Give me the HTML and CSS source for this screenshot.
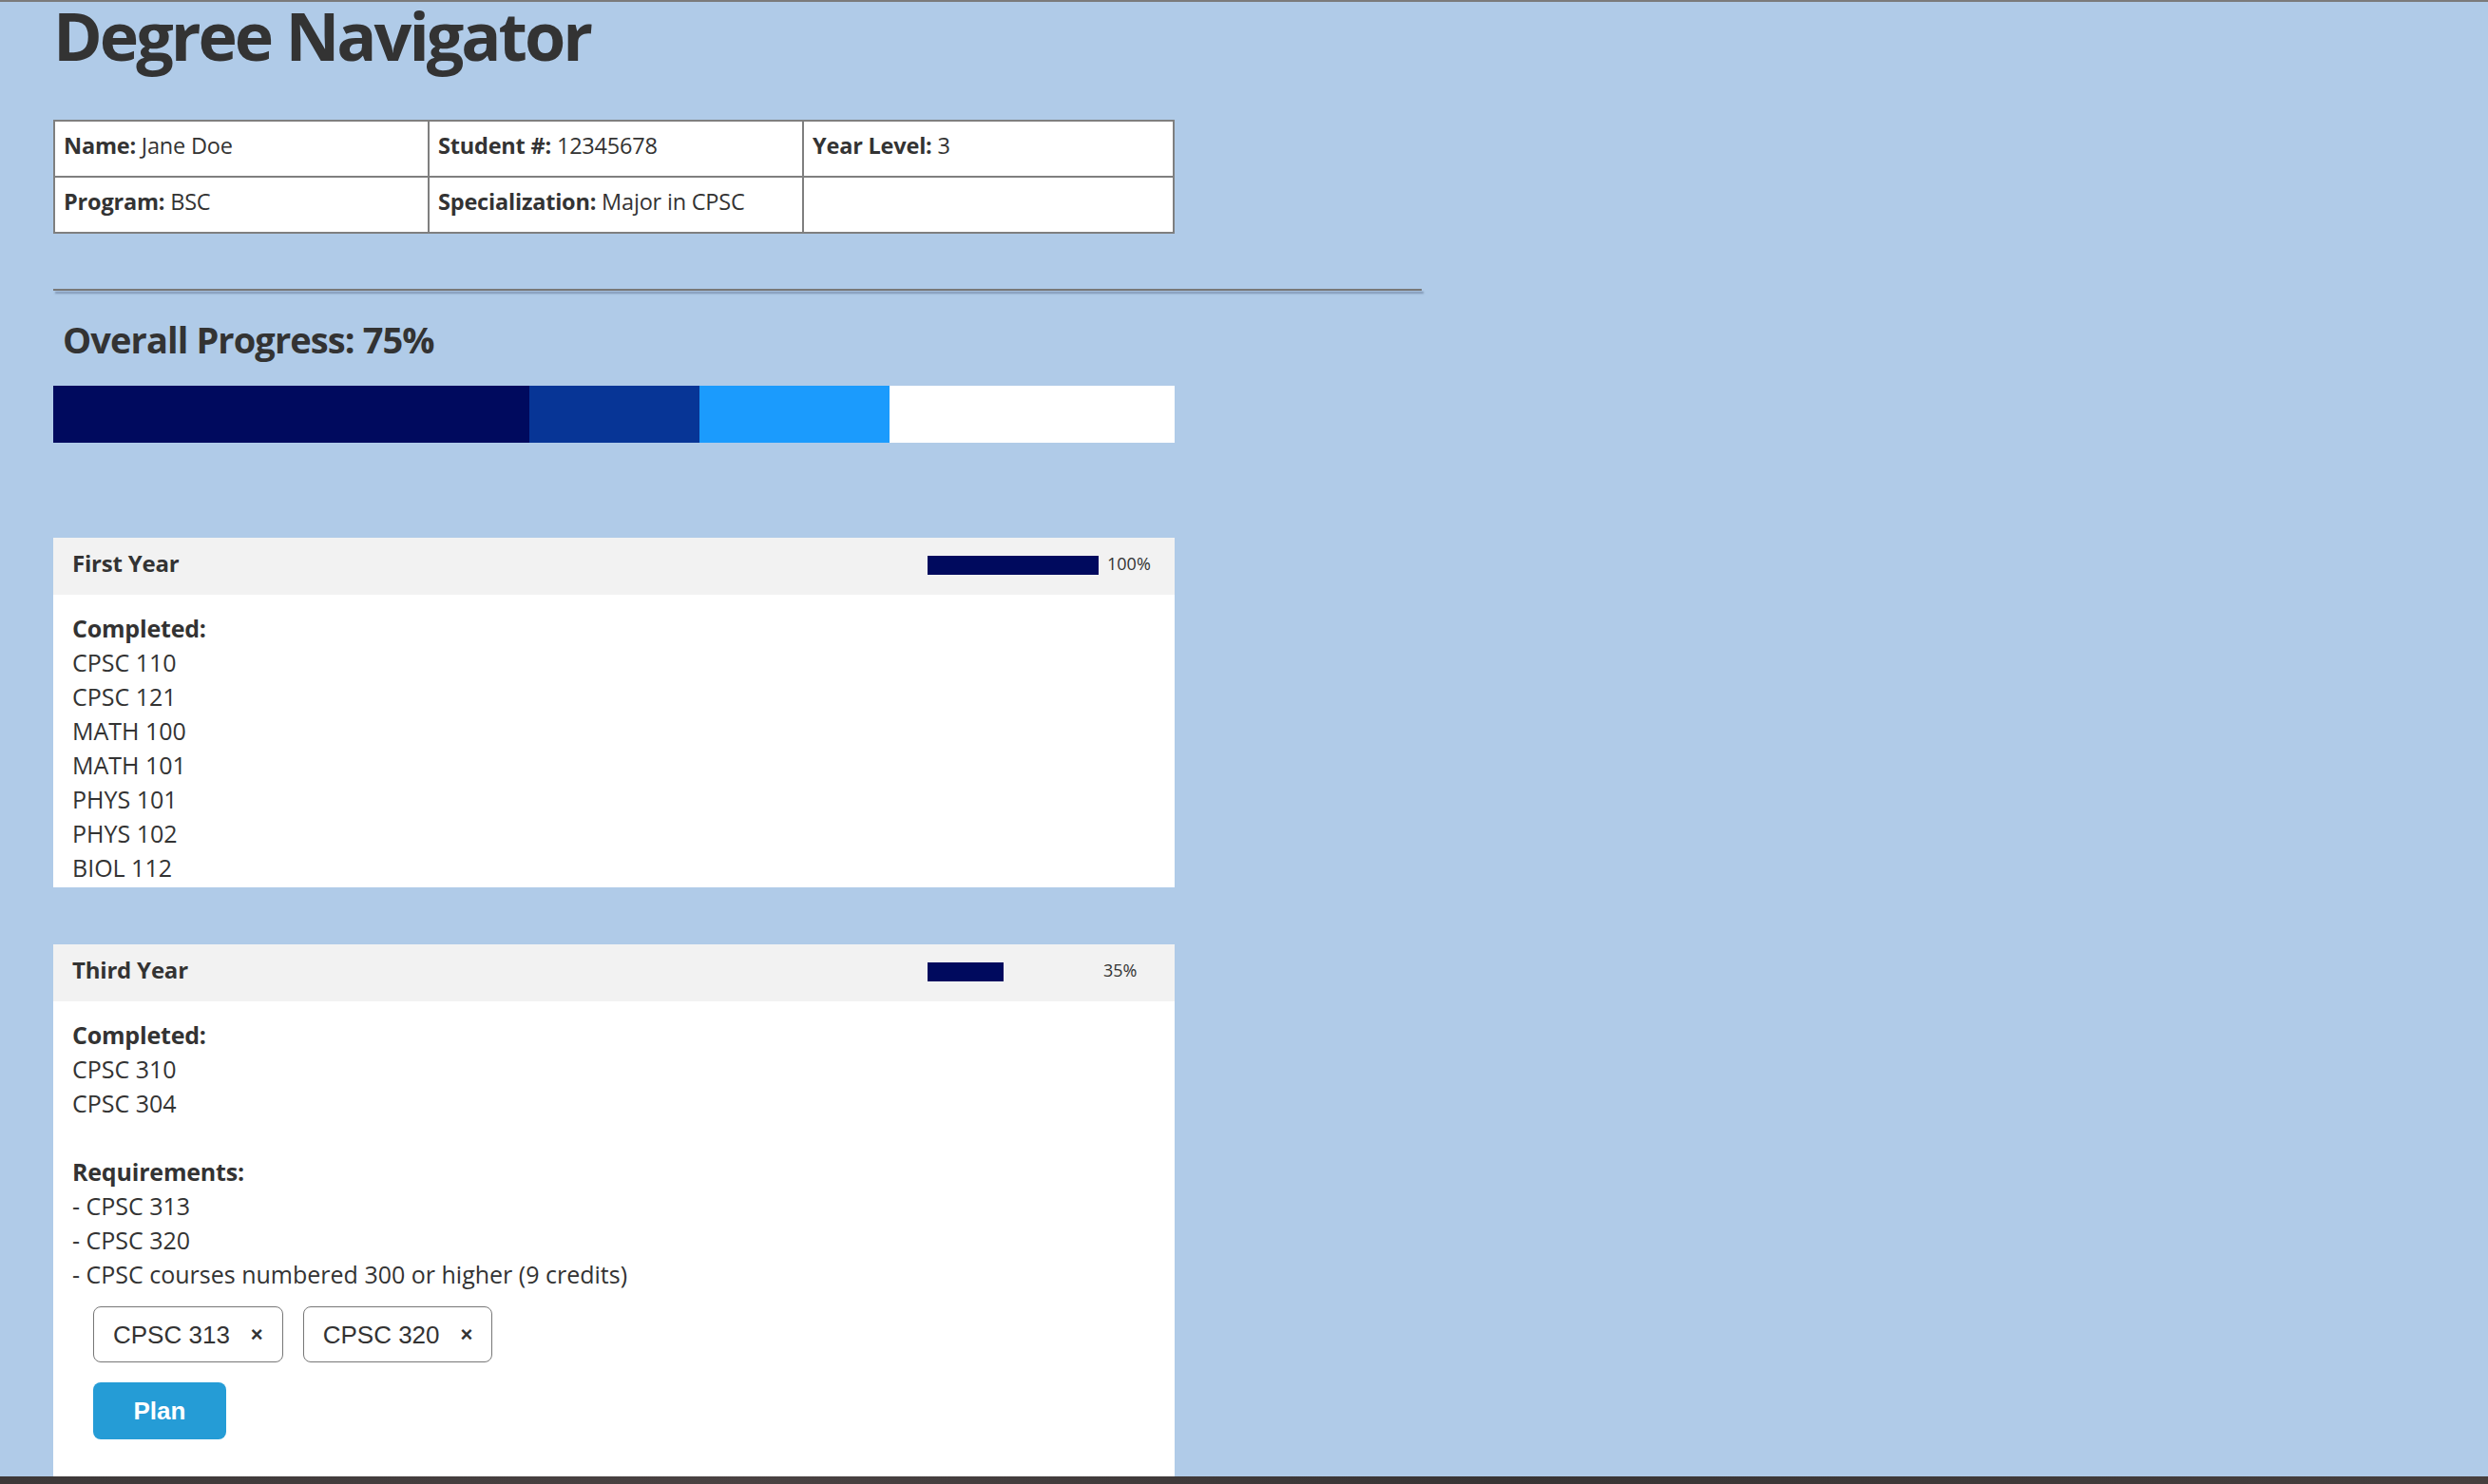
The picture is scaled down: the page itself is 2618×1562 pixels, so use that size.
FILE: index.html
```html
<!DOCTYPE html>
<html lang="en">
<head>
<meta charset="utf-8">
<title>Degree Navigator</title>
<link rel="stylesheet" href="styles.css">
</head>
<body>
<h1 class="page-title">Degree Navigator</h1>

<div class="info-grid">
  <div class="info-cell"><b>Name:</b> Jane Doe</div>
  <div class="info-cell"><b>Student #:</b> 12345678</div>
  <div class="info-cell"><b>Year Level:</b> 3</div>
  <div class="info-cell"><b>Program:</b> BSC</div>
  <div class="info-cell"><b>Specialization:</b> Major in CPSC</div>
  <div class="info-cell"></div>
</div>

<hr class="divider">

<h2 class="overall-title">Overall Progress: 75%</h2>
<div class="overall-bar">
  <div class="seg seg-1" style="width:501px"></div>
  <div class="seg seg-2" style="width:179px"></div>
  <div class="seg seg-3" style="width:200px"></div>
</div>

<section class="year-card first-card">
  <div class="year-head">
    <span class="year-title">First Year</span>
    <div class="year-progress">
      <div class="track"><div class="fill" style="width:180px"></div></div>
      <span class="pct">100%</span>
    </div>
  </div>
  <div class="year-body">
    <div class="label">Completed:</div>
    <ul class="course-list">
      <li>CPSC 110</li>
      <li>CPSC 121</li>
      <li>MATH 100</li>
      <li>MATH 101</li>
      <li>PHYS 101</li>
      <li>PHYS 102</li>
      <li>BIOL 112</li>
    </ul>
  </div>
</section>

<section class="year-card third-card">
  <div class="year-head">
    <span class="year-title">Third Year</span>
    <div class="year-progress">
      <div class="track"><div class="fill" style="width:80px"></div></div>
      <span class="pct pct-small">35%</span>
    </div>
  </div>
  <div class="year-body">
    <div class="label">Completed:</div>
    <ul class="course-list">
      <li>CPSC 310</li>
      <li>CPSC 304</li>
    </ul>
    <div class="label req-label">Requirements:</div>
    <ul class="course-list">
      <li>- CPSC 313</li>
      <li>- CPSC 320</li>
      <li>- CPSC courses numbered 300 or higher (9 credits)</li>
    </ul>
    <div class="chips">
      <span class="chip">CPSC 313<span class="chip-x">×</span></span>
      <span class="chip">CPSC 320<span class="chip-x">×</span></span>
    </div>
    <button class="plan-btn" type="button">Plan</button>
  </div>
</section>

<div class="desktop-strip"></div>
</body>
</html>
```

FILE: styles.css
```css
html {
  background: #b0cbe8;
}

body {
  margin: 0;
  padding: 0 0 0 56px;
  border-top: 2px solid #7b7b7b;
  background: #b0cbe8;
  color: #333333;
  font-family: "Open Sans", Lato, sans-serif;
}

.page-title {
  margin: 0;
  font-size: 70px;
  line-height: 70px;
  font-weight: 700;
  letter-spacing: -3px;
  color: #333333;
}

.info-grid {
  margin-top: 54px;
  width: 1176px;
  display: grid;
  grid-template-columns: 392px 392px 388px;
  grid-auto-rows: 57px;
  gap: 2px;
  border: 2px solid #7f7f7f;
  background: #7f7f7f;
}

.info-cell {
  background: #ffffff;
  padding: 0 0 7px 9px;
  font-size: 23.5px;
  line-height: 50px;
  letter-spacing: -0.2px;
  white-space: nowrap;
}

.info-cell b {
  font-weight: 700;
}

.divider {
  width: 1440px;
  height: 2px;
  margin: 58px 0 32px 0;
  border: 0;
  background: #787878;
  box-shadow: 2px 3px 2px rgba(80, 100, 130, 0.55);
}

.overall-title {
  margin: 0 0 0 10px;
  font-size: 38px;
  line-height: 38px;
  font-weight: 700;
  letter-spacing: -0.9px;
}

.overall-bar {
  margin-top: 30px;
  width: 1180px;
  height: 60px;
  background: #ffffff;
  display: flex;
}

.seg {
  height: 100%;
}

.seg-1 { background: #000a5e; }
.seg-2 { background: #073596; }
.seg-3 { background: #1b9bfd; }

.year-card {
  width: 1180px;
  background: #ffffff;
}

.first-card {
  margin-top: 100px;
}

.third-card {
  margin-top: 60px;
  padding-bottom: 60px;
}

.year-head {
  height: 60px;
  background: #f2f2f2;
  padding: 0 20px;
  display: flex;
  align-items: flex-start;
  justify-content: space-between;
}

.year-title {
  margin-top: 15px;
  font-size: 24px;
  line-height: 24px;
  font-weight: 700;
  letter-spacing: -0.2px;
}

.year-progress {
  width: 240px;
  display: flex;
  align-items: flex-start;
}

.track {
  margin-top: 19px;
  width: 180px;
  height: 20px;
}

.fill {
  height: 100%;
  background: #000a5e;
}

.pct {
  margin: 18px 0 0 9px;
  font-size: 18px;
  line-height: 18px;
}

.pct-small {
  margin-left: 5px;
}

.year-body {
  padding: 17px 20px 3px 20px;
  font-size: 25px;
  line-height: 36px;
}

.label {
  font-weight: 700;
  letter-spacing: -0.2px;
}

.req-label {
  margin-top: 36px;
}

.course-list {
  list-style: none;
  margin: 0;
  padding: 0;
}

.chips {
  margin: 16px 0 0 22px;
  display: flex;
  gap: 21px;
}

.chip {
  height: 59px;
  box-sizing: border-box;
  display: inline-flex;
  align-items: center;
  padding: 0 20px 0 20px;
  border: 1.5px solid #777777;
  border-radius: 8px;
  background: #ffffff;
  font-family: "Liberation Sans", Arial, sans-serif;
  font-size: 26px;
  line-height: 26px;
  color: #333333;
}

.chip-x {
  margin-left: 22px;
  font-size: 22px;
  font-weight: 700;
}

.plan-btn {
  display: block;
  margin: 21px 0 0 22px;
  width: 140px;
  height: 60px;
  border: 0;
  border-radius: 8px;
  background: #259cd6;
  color: #ffffff;
  font-family: "Liberation Sans", Arial, sans-serif;
  font-size: 26px;
  font-weight: 700;
  padding: 0;
}

.desktop-strip {
  position: fixed;
  left: 0;
  right: 0;
  bottom: 0;
  height: 8px;
  background: linear-gradient(90deg, #3d3838, #4a4242 30%, #383434 60%, #463f3e);
}
```
